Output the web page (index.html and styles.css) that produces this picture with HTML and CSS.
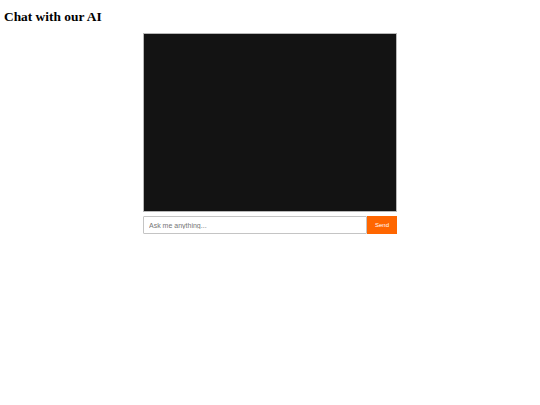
FILE: index.html
```html
<!DOCTYPE html>
<html>
<head>
<meta charset="utf-8">
<link rel="stylesheet" href="styles.css">
</head>
<body>
<h1 class="title">Chat with our AI</h1>
<div class="chat">
  <div class="log"></div>
  <form class="composer">
    <input class="ask" type="text" placeholder="Ask me anything...">
    <button class="send" type="button">Send</button>
  </form>
</div>
</body>
</html>
```
FILE: styles.css
```css
html, body {
  margin: 0;
  padding: 0;
  background: #fff;
}
body {
  padding: 4px;
  font-family: "Liberation Serif", "Times New Roman", serif;
}
.title {
  margin: 5px 0 0 0;
  font-size: 13.4px;
  line-height: 16px;
  font-weight: bold;
  color: #000;
}
.chat {
  width: 254px;
  margin: 8px auto 0;
  display: flex;
  flex-direction: column;
  gap: 4px;
}
.log {
  height: 177px;
  background: #131313;
  border: 1px solid #b8b8b8;
}
.composer {
  display: flex;
  height: 18px;
  margin: 0;
}
.ask {
  flex: 1;
  min-width: 0;
  box-sizing: border-box;
  height: 18px;
  margin: 0;
  padding: 0 5px;
  border: 1px solid #c4c4c4;
  border-radius: 1px;
  font-family: "Liberation Sans", Arial, sans-serif;
  font-size: 7px;
  color: #333;
  outline: none;
}
.ask::placeholder {
  color: #757575;
}
.send {
  width: 30px;
  height: 18px;
  margin: 0;
  padding: 0;
  border: none;
  background: #ff6600;
  color: #fff;
  font-family: "Liberation Sans", Arial, sans-serif;
  font-size: 6px;
  font-weight: normal;
}
```
